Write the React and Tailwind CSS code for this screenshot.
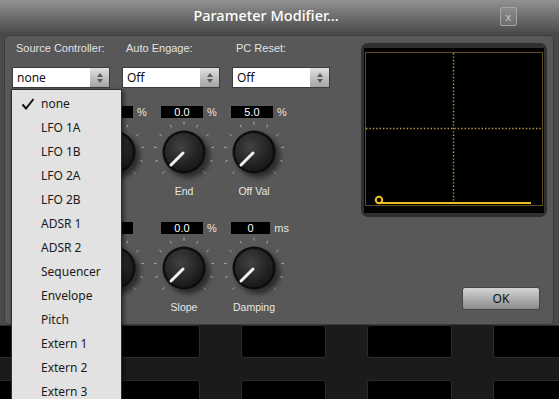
import React from "react";

const sans = { fontFamily: '"Noto Sans", "Open Sans", sans-serif' };
const arial = { fontFamily: '"Liberation Sans", Arial, sans-serif' };

const sources = [
  "none",
  "LFO 1A",
  "LFO 1B",
  "LFO 2A",
  "LFO 2B",
  "ADSR 1",
  "ADSR 2",
  "Sequencer",
  "Envelope",
  "Pitch",
  "Extern 1",
  "Extern 2",
  "Extern 3",
];

// the first two columns sit behind the open list, so their texts stay empty
const knobRows = [
  [
    { id: "a", label: "", value: "", unit: "" },
    { id: "b", label: "", value: "", unit: "%" },
    { id: "c", label: "End", value: "0.0", unit: "%" },
    { id: "d", label: "Off Val", value: "5.0", unit: "%" },
  ],
  [
    { id: "e", label: "", value: "", unit: "" },
    { id: "f", label: "", value: "", unit: "" },
    { id: "g", label: "Slope", value: "0.0", unit: "%" },
    { id: "h", label: "Damping", value: "0", unit: "ms" },
  ],
];

function Select({ value }) {
  return (
    <div className="flex h-[21px] w-[98px] border border-[#3c3c3c]">
      <div className="flex flex-1 items-center bg-white pl-[4px] text-[12px] text-[#111]" style={sans}>
        {value}
      </div>
      <div className="flex w-[19px] flex-col items-center justify-center gap-[2px] bg-linear-to-b from-[#e0e0e0] to-[#a4a4a4]">
        <span className="h-0 w-0 border-x-[3.5px] border-b-[4px] border-x-transparent border-b-[#5a5a5a]" />
        <span className="h-0 w-0 border-x-[3.5px] border-t-[4px] border-x-transparent border-t-[#5a5a5a]" />
      </div>
    </div>
  );
}

function Knob() {
  const ticks = [];
  for (let i = 0; i < 11; i++) {
    const a = ((-135 + i * 27) * Math.PI) / 180;
    ticks.push(
      <line
        key={i}
        x1={32 + Math.sin(a) * 27.5}
        y1={32 - Math.cos(a) * 27.5}
        x2={32 + Math.sin(a) * 30.5}
        y2={32 - Math.cos(a) * 30.5}
        stroke="#a8a8a8"
        strokeWidth="1"
      />
    );
  }
  return (
    <svg width="64" height="64" viewBox="0 0 64 64">
      <defs>
        <radialGradient id="knobBody" cx="40%" cy="35%" r="70%">
          <stop offset="0" stopColor="#424242" />
          <stop offset="1" stopColor="#181818" />
        </radialGradient>
        <filter id="knobShadow" x="-50%" y="-50%" width="200%" height="200%">
          <feGaussianBlur stdDeviation="2.5" />
        </filter>
      </defs>
      {ticks}
      <circle cx="36" cy="36" r="22" fill="#000" opacity="0.5" filter="url(#knobShadow)" />
      <circle cx="32" cy="32" r="21.5" fill="#0e0e0e" />
      <circle cx="32" cy="32" r="19.5" fill="url(#knobBody)" stroke="#0a0a0a" strokeWidth="2" strokeDasharray="1 1.3" />
      <circle cx="32" cy="32" r="17" fill="url(#knobBody)" />
      <line x1="31" y1="33" x2="19" y2="45" stroke="#f2f2f2" strokeWidth="3" strokeLinecap="round" />
    </svg>
  );
}

function KnobCell({ label, value, unit }) {
  return (
    <div className="flex w-[70px] flex-col">
      <div className="flex h-[12px] items-center gap-[4px] pl-[12px]">
        <div className="flex h-[12px] w-[42px] items-center justify-center bg-black text-[11px] leading-none text-white" style={arial}>
          {value}
        </div>
        <span className="text-[11px] leading-none text-[#e4e4e4]" style={arial}>
          {unit}
        </span>
      </div>
      <div className="mt-[2px] flex justify-center">
        <Knob />
      </div>
      <div className="mt-[1px] h-[12px] text-center text-[10.5px] leading-[12px] text-[#e6e6e6]" style={arial}>
        {label}
      </div>
    </div>
  );
}

function Graph() {
  return (
    <div className="flex h-[174px] w-[186px] flex-col rounded-[7px] bg-[#303030] px-[3px] pb-[4px] pt-[5px]">
      <svg width="180" height="165" viewBox="0 0 180 165" className="bg-black">
        <rect x="1.5" y="4.5" width="177" height="153" fill="none" stroke="#5e5020" strokeWidth="1" />
        <line x1="89.5" y1="5" x2="89.5" y2="157" stroke="#b89e48" strokeWidth="1.4" strokeDasharray="1.4 2" />
        <line x1="2" y1="80.5" x2="178" y2="80.5" stroke="#b89e48" strokeWidth="1.4" strokeDasharray="1.4 2" />
        <circle cx="15" cy="152" r="3.2" fill="none" stroke="#f0c020" strokeWidth="2" />
        <line x1="14" y1="155" x2="167" y2="155" stroke="#f0c020" strokeWidth="2" />
      </svg>
    </div>
  );
}

export default function App() {
  return (
    <div className="relative flex h-[399px] w-[559px] flex-col overflow-hidden bg-black" style={sans}>
      {/* dialog */}
      <div className="flex h-[325px] shrink-0 flex-col">
        <div className="flex h-[32px] items-center bg-linear-to-b from-[#929292] to-[#4e4e4e]">
          <div className="flex flex-1 justify-center pl-[32px] text-[14.5px] font-medium text-white">
            Parameter Modifier...
          </div>
          <div className="mr-[42px] flex h-[19px] w-[17px] items-center justify-center rounded-[2px] border border-[#a5a5a5] bg-linear-to-b from-[#8c8c8c] to-[#6e6e6e] text-[11px] leading-none text-[#c8c8c8]">
            x
          </div>
        </div>
        <div className="flex flex-1 flex-col bg-[#4a4a4a] pl-[4px] pr-[5px] pt-[3px]">
          <div className="flex flex-1 rounded-[5px] border border-[#3b3b3b] bg-[#585858]">
            <div className="flex w-[356px] flex-col">
              <div className="pl-[7px]">
                <div className="flex pt-[5px]">
                  {["Source Controller:", "Auto Engage:", "PC Reset:"].map((l) => (
                    <div key={l} className="w-[110px] pl-[4px] text-[11px] leading-[14px] text-[#e2e2e2]" style={arial}>
                      {l}
                    </div>
                  ))}
                </div>
                <div className="mt-[12px] flex">
                  {["none", "Off", "Off"].map((v, i) => (
                    <div key={i} className="w-[110px]">
                      <Select value={v} />
                    </div>
                  ))}
                </div>
              </div>
              <div className="mt-[18px] flex flex-col gap-[25px] pl-[4px]">
                {knobRows.map((row, r) => (
                  <div key={r} className="flex">
                    {row.map((k) => (
                      <KnobCell key={k.id} {...k} />
                    ))}
                  </div>
                ))}
              </div>
            </div>
            <div className="flex flex-col pt-[7px]">
              <Graph />
              <button className="ml-[101px] mt-[70px] flex h-[23px] w-[78px] items-center justify-center rounded-[3px] border border-[#454545] bg-linear-to-b from-[#d4d4d4] to-[#8c8c8c] text-[12px] text-[#111]">
                OK
              </button>
            </div>
          </div>
        </div>
      </div>

      {/* backdrop grid */}
      <div className="flex min-h-0 flex-1 flex-col gap-[22px] overflow-hidden bg-[#1b1b1b]">
        {[0, 1].map((r) => (
          <div key={r} className={`ml-[-11px] flex shrink-0 gap-[41px] ${r === 0 ? "h-[33px]" : "h-[30px]"}`}>
            {[0, 1, 2, 3, 4].map((c) => (
              <div key={c} className="w-[85px] shrink-0 rounded-[3px] border border-[#2c2c2c] bg-black" />
            ))}
          </div>
        ))}
      </div>

      {/* open dropdown list */}
      <div className="absolute left-[11px] top-[89px] h-[330px] w-[111px] border border-[#2e2e2e] bg-[#e2e2e2] pt-[2px] shadow-[2px_2px_4px_rgba(0,0,0,0.5)]">
        {sources.map((s, i) => (
          <div key={s} className="flex h-[24px] items-center text-[12px] text-[#1a1a1a]">
            <div className="flex w-[29px] justify-center pl-[3px]">
              {i === 0 && (
                <svg width="14" height="12" viewBox="0 0 14 12">
                  <path d="M1.5 6.5 L5 10.5 L12.5 1" fill="none" stroke="#111" strokeWidth="2" />
                </svg>
              )}
            </div>
            <span>{s}</span>
          </div>
        ))}
      </div>
    </div>
  );
}
